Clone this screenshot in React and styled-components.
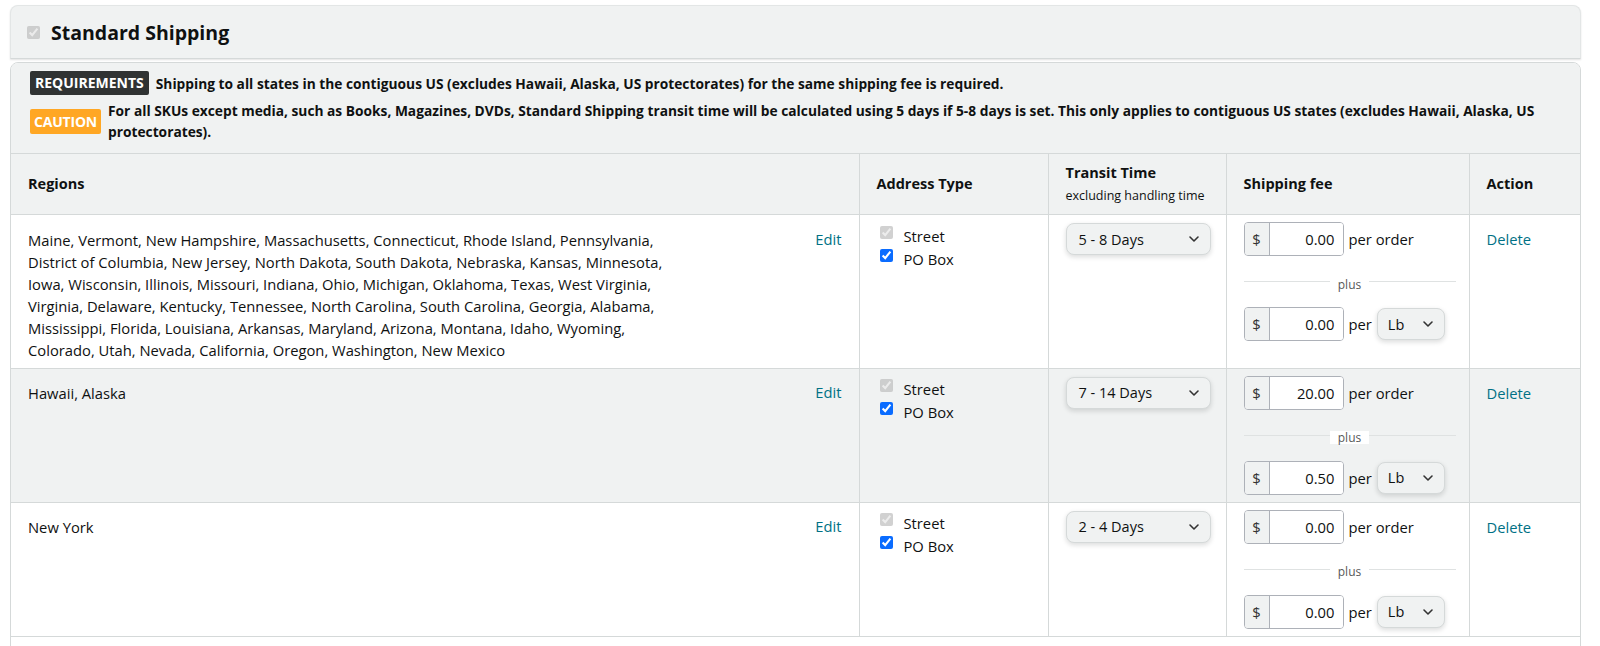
import React from 'react';
import styled, { createGlobalStyle } from 'styled-components';
import { ChevronDown } from 'lucide-react';

const regions = [
    {
        id: 'contiguous',
        names:
            'Maine, Vermont, New Hampshire, Massachusetts, Connecticut, Rhode Island, Pennsylvania, District of Columbia, New Jersey, North Dakota, South Dakota, Nebraska, Kansas, Minnesota, Iowa, Wisconsin, Illinois, Missouri, Indiana, Ohio, Michigan, Oklahoma, Texas, West Virginia, Virginia, Delaware, Kentucky, Tennessee, North Carolina, South Carolina, Georgia, Alabama, Mississippi, Florida, Louisiana, Arkansas, Maryland, Arizona, Montana, Idaho, Wyoming, Colorado, Utah, Nevada, California, Oregon, Washington, New Mexico',
        transit: '5 - 8 Days',
        perOrder: '0.00',
        perUnit: '0.00',
    },
    {
        id: 'hi-ak',
        names: 'Hawaii, Alaska',
        transit: '7 - 14 Days',
        perOrder: '20.00',
        perUnit: '0.50',
    },
    {
        id: 'ny',
        names: 'New York',
        transit: '2 - 4 Days',
        perOrder: '0.00',
        perUnit: '0.00',
    },
];

const GlobalStyle = createGlobalStyle`
    body {
        margin: 0;
        background: #fff;
        color: #0f1111;
        font-family: "Open Sans", "Noto Sans", Arial, sans-serif;
    }
`;

const Page = styled.div`
    padding: 5px 19px 0 10px;
    height: 641px;
    overflow: hidden;
`;

const TitleBar = styled.div`
    box-sizing: border-box;
    height: 54px;
    display: flex;
    align-items: center;
    gap: 11px;
    padding: 0 16px;
    background: #f0f2f2;
    border: 1px solid #e3e6e6;
    border-bottom-color: #d5d9d9;
    border-radius: 8px 8px 0 0;
    box-shadow: 0 1px 2px rgba(15, 17, 17, 0.12);
`;

const Title = styled.h2`
    margin: 0;
    font-size: 19.5px;
    font-weight: 700;
`;

const Check = styled.input.attrs({ type: 'checkbox', readOnly: true })`
    width: 13px;
    height: 13px;
    margin: 0;
    accent-color: #0a6cff;
`;

const Panel = styled.div`
    margin-top: 3px;
    border: 1px solid #d5d9d9;
    border-radius: 8px 8px 0 0;
    background: #fff;
    overflow: hidden;
    padding-bottom: 30px;
`;

const Notice = styled.div`
    background: #f0f2f2;
    padding: 8px 16px 11px 19px;
    display: flex;
    flex-direction: column;
    gap: 5px;
`;

const NoticeRow = styled.div`
    display: flex;
    align-items: center;
    gap: 7px;
`;

const Badge = styled.span`
    flex: none;
    height: ${(p) => (p.$tone === 'caution' ? 25 : 24)}px;
    line-height: ${(p) => (p.$tone === 'caution' ? 25 : 24)}px;
    padding: 0 ${(p) => (p.$tone === 'caution' ? 4 : 5)}px;
    border-radius: 2px;
    background: ${(p) => (p.$tone === 'caution' ? '#ffa724' : '#303333')};
    color: #fff;
    font-size: 14px;
    font-weight: 700;
    letter-spacing: ${(p) => (p.$tone === 'caution' ? -0.2 : 0)}px;
`;

const NoticeText = styled.p`
    margin: 0;
    font-size: 13.75px;
    font-weight: 700;
    line-height: 21px;
`;

const Table = styled.table`
    width: 100%;
    border-collapse: collapse;
    table-layout: fixed;
`;

const Th = styled.th`
    height: 60px;
    padding: 0 17px;
    background: #f0f2f2;
    border: 1px solid #d5d9d9;
    text-align: left;
    vertical-align: middle;
    font-size: 14.5px;
    font-weight: 700;
    line-height: 20px;

    &:first-child {
        border-left: 0;
    }
    &:last-child {
        border-right: 0;
    }
`;

const Sub = styled.div`
    margin-top: 4px;
    font-size: 12.5px;
    font-weight: 400;
    line-height: 18px;
    color: #0f1111;
`;

const Row = styled.tr`
    background: ${(p) => (p.$shaded ? '#f0f2f2' : '#fff')};
`;

const Td = styled.td`
    padding: 7px 17px 7px;
    border: 1px solid #d5d9d9;
    vertical-align: top;
    font-size: 14.75px;

    &:first-child {
        border-left: 0;
    }
    &:last-child {
        border-right: 0;
    }
`;

const RegionCell = styled.div`
    display: flex;
    justify-content: space-between;
    gap: 24px;
    padding: 6.6px 0 0;
    line-height: 22px;
`;

const RegionNames = styled.div`
    max-width: 654px;
`;

const Link = styled.a`
    flex: none;
    color: #007185;
    text-decoration: none;
    line-height: 20px;
    cursor: pointer;
`;

const ActionLink = styled(Link)`
    display: block;
    padding-top: 7px;
`;

const CheckList = styled.div`
    padding-top: 2.5px;
`;

const CheckRow = styled.label`
    display: flex;
    align-items: flex-start;
    height: 23px;
    line-height: 23px;

    ${Check} {
        margin: 1px 11px 0 3px;
    }
`;

const Select = styled.div`
    box-sizing: border-box;
    width: ${(p) => p.$width}px;
    height: 32px;
    display: flex;
    align-items: center;
    justify-content: space-between;
    padding: 0 8px 0 ${(p) => p.$pad}px;
    margin-top: ${(p) => p.$top || 0}px;
    background: #f0f2f2;
    border: 1px solid #d5d9d9;
    border-radius: 8px;
    box-shadow: 0 2px 5px rgba(15, 17, 17, 0.15);
    font-size: 14.5px;
    color: #0f1111;
    cursor: pointer;

    svg {
        color: #333;
    }
`;

const FeeStack = styled.div`
    width: 212px;
`;

const FeeLine = styled.div`
    display: flex;
    align-items: center;
    gap: 5px;
    height: 34px;
`;

const Money = styled.div`
    box-sizing: border-box;
    width: 100px;
    height: 34px;
    display: flex;
    border: 1px solid #adb1b8;
    border-radius: 4px;
    overflow: hidden;
    background: #fff;
`;

const Currency = styled.span`
    width: 24px;
    display: flex;
    align-items: center;
    justify-content: center;
    background: #f0f2f2;
    border-right: 1px solid #adb1b8;
    color: #333;
`;

const Amount = styled.input.attrs({ readOnly: true })`
    flex: 1;
    min-width: 0;
    border: 0;
    padding: 0 8px 0 0;
    text-align: right;
    font: inherit;
    font-size: 14.75px;
    color: #0f1111;
    background: #fff;
    outline: none;
`;

const Divider = styled.div`
    height: 51px;
    display: flex;
    align-items: center;

    &::before,
    &::after {
        content: '';
        flex: 1;
        height: 1px;
        background: #dfe2e2;
    }
`;

const DividerLabel = styled.span`
    margin-top: 5px;
    padding: 0 8px;
    background: #fff;
    font-size: 12px;
    line-height: 13px;
    color: #565959;
`;

const Dropdown = ({ label, width, pad, top }) => (
    <Select $width={width} $pad={pad} $top={top}>
        <span>{label}</span>
        <ChevronDown size={16} strokeWidth={2.4} />
    </Select>
);

const App = () => {
    return (
        <Page>
            <GlobalStyle />
            <TitleBar>
                <Check checked disabled />
                <Title>Standard Shipping</Title>
            </TitleBar>

            <Panel>
                <Notice>
                    <NoticeRow>
                        <Badge>REQUIREMENTS</Badge>
                        <NoticeText>
                            Shipping to all states in the contiguous US (excludes Hawaii, Alaska, US
                            protectorates) for the same shipping fee is required.
                        </NoticeText>
                    </NoticeRow>
                    <NoticeRow>
                        <Badge $tone="caution">CAUTION</Badge>
                        <NoticeText>
                            For all SKUs except media, such as Books, Magazines, DVDs, Standard Shipping
                            transit time will be calculated using 5 days if 5-8 days is set. This only
                            applies to contiguous US states (excludes Hawaii, Alaska, US protectorates).
                        </NoticeText>
                    </NoticeRow>
                </Notice>

                <Table>
                    <colgroup>
                        <col style={{ width: 848 }} />
                        <col style={{ width: 189 }} />
                        <col style={{ width: 178 }} />
                        <col style={{ width: 243 }} />
                        <col />
                    </colgroup>
                    <thead>
                        <tr>
                            <Th>Regions</Th>
                            <Th>Address Type</Th>
                            <Th>
                                Transit Time
                                <Sub>excluding handling time</Sub>
                            </Th>
                            <Th>Shipping fee</Th>
                            <Th>Action</Th>
                        </tr>
                    </thead>
                    <tbody>
                        {regions.map((r, i) => (
                            <Row key={r.id} $shaded={i === 1}>
                                <Td>
                                    <RegionCell>
                                        <RegionNames>{r.names}</RegionNames>
                                        <Link>Edit</Link>
                                    </RegionCell>
                                </Td>
                                <Td>
                                    <CheckList>
                                        <CheckRow>
                                            <Check checked disabled />
                                            Street
                                        </CheckRow>
                                        <CheckRow>
                                            <Check checked />
                                            PO Box
                                        </CheckRow>
                                    </CheckList>
                                </Td>
                                <Td>
                                    <Dropdown label={r.transit} width={145} pad={12} top={1} />
                                </Td>
                                <Td>
                                    <FeeStack>
                                        <FeeLine>
                                            <Money>
                                                <Currency>$</Currency>
                                                <Amount value={r.perOrder} />
                                            </Money>
                                            per order
                                        </FeeLine>
                                        <Divider>
                                            <DividerLabel>plus</DividerLabel>
                                        </Divider>
                                        <FeeLine>
                                            <Money>
                                                <Currency>$</Currency>
                                                <Amount value={r.perUnit} />
                                            </Money>
                                            per
                                            <Dropdown label="Lb" width={68} pad={10} />
                                        </FeeLine>
                                    </FeeStack>
                                </Td>
                                <Td>
                                    <ActionLink>Delete</ActionLink>
                                </Td>
                            </Row>
                        ))}
                    </tbody>
                </Table>
            </Panel>
        </Page>
    );
};

export default App;
